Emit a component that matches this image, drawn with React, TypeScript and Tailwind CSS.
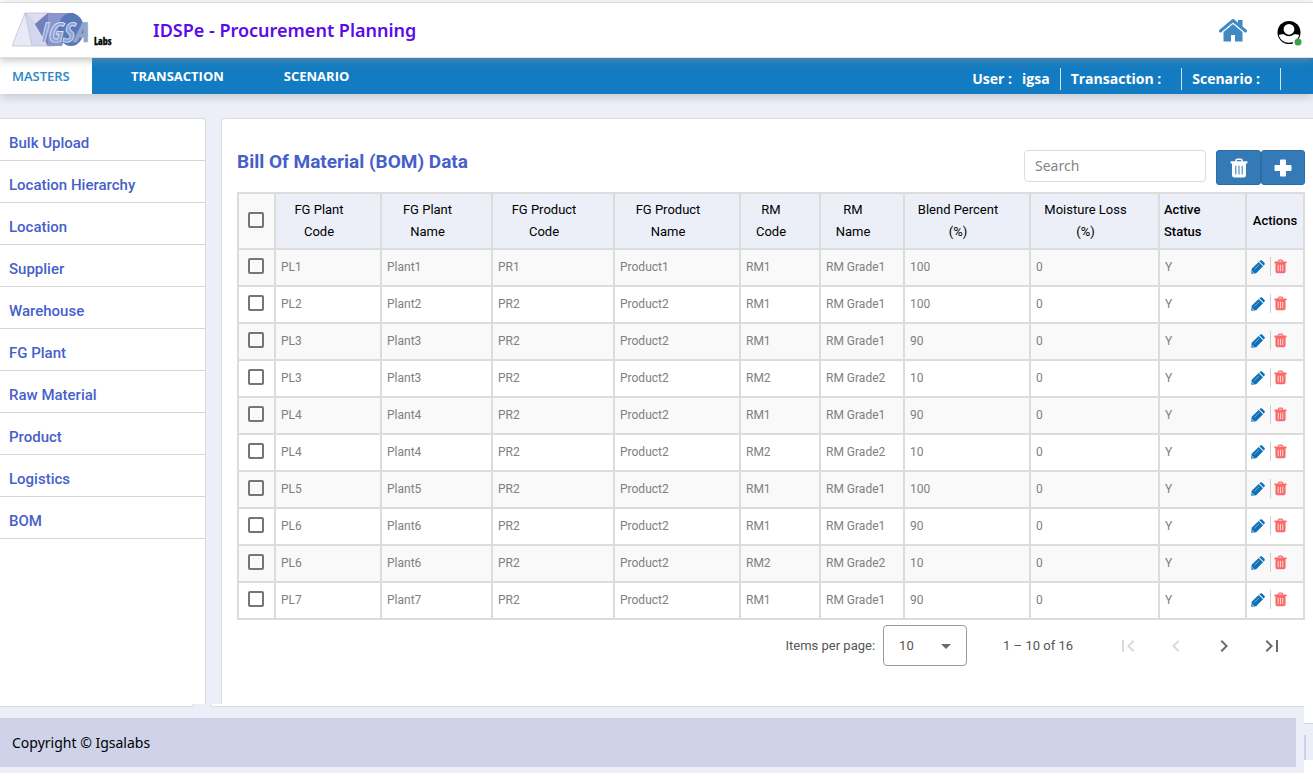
import React from "react";

const menu = [
  "Bulk Upload", "Location Hierarchy", "Location", "Supplier", "Warehouse",
  "FG Plant", "Raw Material", "Product", "Logistics", "BOM",
];

const columns: string[][] = [
  ["FG Plant", "Code"], ["FG Plant", "Name"], ["FG Product", "Code"], ["FG Product", "Name"],
  ["RM", "Code"], ["RM", "Name"], ["Blend Percent", "(%)"], ["Moisture Loss", "(%)"],
];

const rows: string[][] = [
  ["PL1", "Plant1", "PR1", "Product1", "RM1", "RM Grade1", "100", "0", "Y"],
  ["PL2", "Plant2", "PR2", "Product2", "RM1", "RM Grade1", "100", "0", "Y"],
  ["PL3", "Plant3", "PR2", "Product2", "RM1", "RM Grade1", "90", "0", "Y"],
  ["PL3", "Plant3", "PR2", "Product2", "RM2", "RM Grade2", "10", "0", "Y"],
  ["PL4", "Plant4", "PR2", "Product2", "RM1", "RM Grade1", "90", "0", "Y"],
  ["PL4", "Plant4", "PR2", "Product2", "RM2", "RM Grade2", "10", "0", "Y"],
  ["PL5", "Plant5", "PR2", "Product2", "RM1", "RM Grade1", "100", "0", "Y"],
  ["PL6", "Plant6", "PR2", "Product2", "RM1", "RM Grade1", "90", "0", "Y"],
  ["PL6", "Plant6", "PR2", "Product2", "RM2", "RM Grade2", "10", "0", "Y"],
  ["PL7", "Plant7", "PR2", "Product2", "RM1", "RM Grade1", "90", "0", "Y"],
];

function Logo() {
  return (
    <svg viewBox="0 0 104 38" className="h-[38px] w-[104px]" role="img" aria-label="IGSA Labs">
      <path d="M0 35 L13 2 L20 35 Z" fill="#e9eaf6" />
      <path d="M13 2 L20 35 L43 35 Z" fill="#d3d6ec" />
      <path d="M13 2 H38 L22 13 Z" fill="#dcdef0" />
      <path d="M0 35 L13 2 H40 M13 2 L20 35 M13 2 L43 35 M0 35 H43" fill="none" stroke="#b9bccb" strokeWidth="0.7" />
      <path d="M23 13 L36 2 H62 L50 35 H36 Z" fill="#8b95cb" />
      <path d="M23 13 L36 2 L36 35 Z" fill="#7480bd" />
      <ellipse cx="59" cy="18.500" rx="13" ry="16.500" fill="#5878b8" />
      <text x="27" y="31" fontSize="27" fontWeight="700" fontStyle="italic" fontFamily="'Liberation Sans Narrow', 'Open Sans Condensed', 'DejaVu Sans Condensed', sans-serif" fill="#8fa5d8" stroke="#e6ebf8" strokeWidth="0.7">
        IGS<tspan fill="#93a6c9" stroke="#93a6c9">A</tspan>
      </text>
      <text x="82" y="34" fontSize="10" fontWeight="700" fill="#000" stroke="#000" strokeWidth="0.4" fontFamily="'Liberation Sans Narrow', 'Open Sans Condensed', 'DejaVu Sans Condensed', sans-serif">Labs</text>
    </svg>
  );
}

function HomeIcon() {
  return (
    <svg viewBox="0 0 28 24" className="h-6 w-7" aria-hidden="true" fill="currentColor">
      <path d="M19 2 H23.500 V9 L19 5 Z" />
      <path d="M1.500 13 L14 2.500 L26.500 13" fill="none" stroke="currentColor" strokeWidth="3" strokeLinejoin="round" strokeLinecap="round" />
      <path d="M4.500 14 L14 6 L23.500 14 V23.500 H16 V17 H12 V23.500 H4.500 Z" />
      <path d="M3.600 13.800 L14 5.200 L24.400 13.800" fill="none" stroke="#fff" strokeWidth="0.900" />
    </svg>
  );
}

function TrashIcon({ className }: { className: string }) {
  return (
    <svg viewBox="0 0 18 20" className={className} aria-hidden="true">
      <path d="M6 3.500 V2.600 Q6 1.200 7.400 1.200 H10.600 Q12 1.200 12 2.600 V3.500" fill="none" stroke="currentColor" strokeWidth="1.600" />
      <rect x="0.500" y="3.200" width="17" height="2.300" rx="0.800" fill="currentColor" />
      <path fillRule="evenodd" d="M2 5 H16 V17 Q16 19.500 13.500 19.500 H4.500 Q2 19.500 2 17 Z M5.300 7.700 V16.500 H6.300 V7.700 Z M8.500 7.700 V16.500 H9.500 V7.700 Z M11.700 7.700 V16.500 H12.700 V7.700 Z" fill="currentColor" />
    </svg>
  );
}

function PlusIcon() {
  return (
    <svg viewBox="0 0 18 18" className="size-[18px]" fill="currentColor" aria-hidden="true">
      <path d="M7 0.500 H11 Q12 0.500 12 1.500 V6 H16.500 Q17.500 6 17.500 7 V11 Q17.500 12 16.500 12 H12 V16.500 Q12 17.500 11 17.500 H7 Q6 17.500 6 16.500 V12 H1.500 Q0.500 12 0.500 11 V7 Q0.500 6 1.500 6 H6 V1.500 Q6 0.500 7 0.500 Z" />
    </svg>
  );
}

function PencilIcon() {
  return (
    <svg viewBox="0 0 14 14" className="size-[14px]" aria-hidden="true">
      <path d="M0.200 13.800 L0.700 8.800 L7.700 1.900 L12 6.200 L5.200 13.200 Z" fill="currentColor" />
      <path d="M8.400 1.300 L9.300 0.500 Q10.200 -0.200 11 0.500 L13.500 3 Q14.200 3.800 13.500 4.600 L12.600 5.500 Z" fill="currentColor" />
      <path d="M3.400 9.400 L8.300 4.500" stroke="#9cc8e6" strokeWidth="0.700" />
      <path d="M1.400 11 L2.900 12.500 L1.500 12.700 Z" fill="#fff" />
    </svg>
  );
}

function Avatar() {
  return (
    <svg viewBox="0 0 26 26" className="size-[26px]" aria-hidden="true">
      <circle cx="12" cy="12.500" r="11.500" fill="#000" />
      <path d="M1.800 15 C3.500 14 5.500 14.200 7.500 14.200 L12 16 L16.500 14.200 C18.500 14.200 20.500 14 22.200 15 C21 19.800 17 22.700 12 22.700 C7 22.700 3 19.800 1.800 15 Z" fill="#fff" />
      <circle cx="12" cy="9.300" r="6.200" fill="#fff" stroke="#000" strokeWidth="1.600" />
      <path d="M16 19 H26 V26 H16 Z" fill="#fff" />
      <circle cx="21" cy="22" r="3.500" fill="#3fa142" />
    </svg>
  );
}

function Box({ label }: { label: string }) {
  return (
    <input
      type="checkbox"
      aria-label={label}
      className="mx-auto block size-4 appearance-none rounded-[2px] border-2 border-[#757575] bg-transparent checked:bg-[#757575]"
    />
  );
}

const pagerIcons = [
  { label: "First page", off: true, d: "M18.41 16.590L13.820 12l4.590-4.590L17 6l-6 6 6 6zM6 6h2v12H6z" },
  { label: "Previous page", off: true, d: "M15.410 7.410L14 6l-6 6 6 6 1.410-1.410L10.830 12z" },
  { label: "Next page", off: false, d: "M10 6L8.590 7.410 13.170 12l-4.580 4.590L10 18l6-6z" },
  { label: "Last page", off: false, d: "M5.590 7.410L10.180 12l-4.590 4.590L7 18l6-6-6-6zM16 6h2v12h-2z" },
];

export default function App() {
  return (
    <div className="flex min-h-screen flex-col bg-white font-['Roboto',sans-serif]">
      <header className="relative z-20 mt-[2px] flex h-14 items-center border-y border-[#dedede] bg-white pl-3 pr-[10px] shadow-[0_2px_8px_rgba(150,150,150,0.6)]">
        <Logo />
        <h1 className="ml-[37px] font-['Noto_Sans',sans-serif] text-lg font-semibold text-[#5b0be6]">IDSPe - Procurement Planning</h1>
        <a href="#home" aria-label="Home" className="ml-auto text-[#4189c3]"><HomeIcon /></a>
        <button type="button" aria-label="Account" className="ml-[30px] mt-[6px]"><Avatar /></button>
      </header>

      <nav className="relative z-10 flex h-9 items-stretch bg-[#127bc1] font-['Open_Sans',sans-serif] text-[13px] font-semibold text-white shadow-[0_2px_10px_rgba(0,0,0,0.2)]">
        <a href="#masters" className="flex w-[92px] items-center bg-white pl-3 pt-[2px] text-[#2b86c5]">MASTERS</a>
        <a href="#transaction" className="ml-[39px] flex items-center pt-[2px] font-bold">TRANSACTION</a>
        <a href="#scenario" className="ml-[60px] flex items-center pt-[2px] font-bold">SCENARIO</a>
        <div className="ml-auto mr-8 mt-[10px] flex h-[22px] items-center text-sm font-bold">
          <span className="flex h-full items-center gap-[10px] border-r border-white/80 pr-[10px]"><span>User :</span><span>igsa</span></span>
          <span className="flex h-full items-center border-r border-white/80 pl-[10px] pr-5">Transaction :</span>
          <span className="flex h-full items-center border-r border-white/80 pl-[10px] pr-5">Scenario :</span>
        </div>
      </nav>

      <div className="flex grow gap-[15px] bg-[#eceff8] pt-6">
        <aside className="w-[206px] shrink-0 rounded-tr border-r border-t border-[#dcdcde] bg-white">
          {menu.map((m) => (
            <a key={m} href="#menu" className="flex h-[42px] items-center border-b border-[#d5d5d5] pl-[9px] pt-[7px] text-[15px] font-medium text-[#475fca]">
              {m}
            </a>
          ))}
        </aside>

        <main className="min-w-0 grow rounded-tl border-l border-t border-[#dcdcde] bg-white pl-[15px] pr-2">
          <div className="flex h-[73px] items-start">
            <h2 className="mt-[29px] text-[19px] font-bold leading-7 text-[#475fca]">Bill Of Material (BOM) Data</h2>
            <input
              type="search"
              aria-label="Search"
              placeholder="Search"
              className="ml-auto mr-[10px] mt-[31px] h-8 w-[182px] rounded border border-[#dcdcdc] px-[10px] pb-[2px] font-['Noto_Sans',sans-serif] text-sm placeholder:text-[#858585]"
            />
            <div className="mt-[31px] flex text-white">
              <button type="button" aria-label="Delete selected" className="flex h-[35px] w-[45px] items-center justify-center rounded-[3px] border border-[#2e6da4] bg-[#337ab7]"><TrashIcon className="h-5 w-[18px]" /></button>
              <button type="button" aria-label="Add" className="flex h-[35px] w-11 items-center justify-center rounded-[3px] border border-[#2e6da4] bg-[#337ab7]"><PlusIcon /></button>
            </div>
          </div>

          <table className="w-full table-fixed border-collapse border-2 border-[#dcdcdc]">
            <colgroup>
              <col className="w-[37px]" /><col className="w-[106px]" /><col className="w-[111px]" /><col className="w-[122px]" />
              <col className="w-[126px]" /><col className="w-[80px]" /><col className="w-[84px]" /><col className="w-[126px]" />
              <col className="w-[129px]" /><col className="w-[87px]" /><col className="w-[58px]" />
            </colgroup>
            <thead>
              <tr className="h-14 bg-[#eceff8] text-[13px] leading-[22px] text-black">
                <th className="border-2 border-[#dcdcdc] bg-[#f9f9f9] p-0 pb-[2px] pr-[2px]"><Box label="Select all" /></th>
                {columns.map((c, i) => (
                  <th key={i} className="border-2 border-[#dcdcdc] p-0 pr-[18px] text-center font-normal">{c[0]}<br />{c[1]}</th>
                ))}
                <th className="border-2 border-[#dcdcdc] p-0 pl-1 text-left font-medium">Active<br />Status</th>
                <th className="border-2 border-[#dcdcdc] p-0 text-center font-medium">Actions</th>
              </tr>
            </thead>
            <tbody>
              {rows.map((r, i) => (
                <tr key={i} className="h-[37px] text-xs text-[#808080] odd:bg-[#f9f9f9]">
                  <td className="border-2 border-[#dcdcdc] p-0 pb-1 pr-[2px]"><Box label={"Select row " + (i + 1)} /></td>
                  {r.map((v, j) => (
                    <td key={j} className="border-2 border-[#dcdcdc] px-[5px] pb-[2px] pt-0">{v}</td>
                  ))}
                  <td className="border-2 border-[#dcdcdc] p-0 pb-[2px] pl-1">
                    <div className="flex items-center">
                      <button type="button" aria-label="Edit" className="text-[#0d70b8]"><PencilIcon /></button>
                      <span className="ml-[5px] mr-[3px] h-[19px] w-px bg-[#cfcfcf]" />
                      <button type="button" aria-label="Delete" className="text-[#fb6a6a]"><TrashIcon className="h-[15px] w-[13px]" /></button>
                    </div>
                  </td>
                </tr>
              ))}
            </tbody>
          </table>

          <div className="mb-[38px] mt-[5px] flex items-center justify-end pr-3 text-[13px] text-[#555]">
            <label htmlFor="page-size">Items per page:</label>
            <div className="relative ml-2">
              <select id="page-size" className="h-[41px] w-[84px] appearance-none rounded border border-[#9b9b9b] bg-white pl-[15px] text-[13px]">
                <option>10</option>
                <option>25</option>
              </select>
              <svg viewBox="0 0 10 5" className="pointer-events-none absolute right-4 top-[19px] h-[5px] w-[10px]" aria-hidden="true"><path d="M0 0h10L5 5z" fill="#6b6b6b" /></svg>
            </div>
            <span className="ml-9 mr-[34px]">1 – 10 of 16</span>
            <div className="flex gap-[6px]">
              {pagerIcons.map((p) => (
                <button key={p.label} type="button" aria-label={p.label} disabled={p.off} className="flex h-10 w-[42px] items-center justify-center text-[#6b6b6b] disabled:text-[#dadada]">
                  <svg viewBox="0 0 24 24" className="size-6" fill="currentColor" aria-hidden="true"><path d={p.d} /></svg>
                </button>
              ))}
            </div>
          </div>
        </main>
      </div>

      <div className="flex">
        <div className="min-w-0 grow bg-[#eceff8] pb-[6px]">
          <div className="flex h-[3px] gap-4">
            <div className="w-[194px] rounded-br border-b border-r border-[#dcdcde] bg-white" />
            <div className="grow rounded-bl border-b border-l border-[#dcdcde] bg-white" />
          </div>
          <footer className="mr-2 mt-[11px] flex h-[49px] items-center bg-[#ced3e9] pl-3 font-['Noto_Sans',sans-serif] text-sm text-black">
            Copyright © Igsalabs
          </footer>
        </div>
        <div className="w-[9px] shrink-0 pt-[19px]">
          <div className="h-[37px] border-t border-[#d8d8da] bg-[#eceff8] pt-[11px]">
            <div className="h-[25px] w-[2px] bg-[#ced3e9]" />
          </div>
        </div>
      </div>
      <div className="h-[6px] bg-white" />
    </div>
  );
}
